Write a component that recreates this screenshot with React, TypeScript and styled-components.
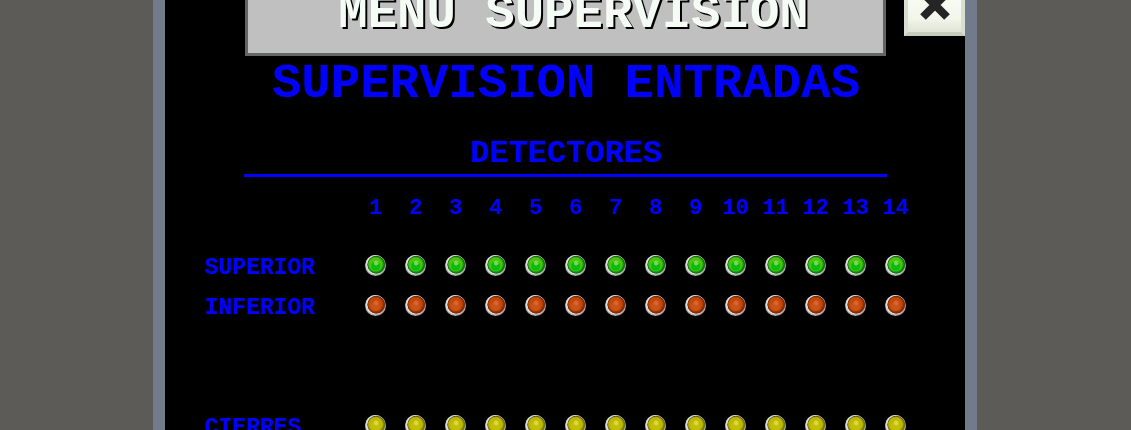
import React from "react";
import styled, { createGlobalStyle } from "styled-components";

const GlobalStyle = createGlobalStyle`
  * { box-sizing: border-box; }
  html, body { margin: 0; background: #5d5b58; }
  body { font-family: "Courier New", "Liberation Mono", monospace; font-weight: 700; }
`;

const Page = styled.div`
  height: 100vh;
  overflow: hidden;
  padding-right: 1px;
  background: #5d5b58;
`;

const Panel = styled.main`
  max-width: 824px;
  min-height: 100%;
  margin: 0 auto;
  border: solid #727b8c;
  border-width: 0 12px;
  background: #000;
  color: #00f;
`;

const Header = styled.header`
  display: flex;
  justify-content: space-between;
  align-items: flex-start;
  height: 56px;
  padding-left: 80px;
`;

const TitleBox = styled.div`
  flex: 1;
  display: flex;
  flex-direction: column;
  justify-content: flex-end;
  align-items: center;
  height: 56px;
  margin-right: 18px;
  padding: 0 0 11px 16px;
  overflow: hidden;
  border: solid #636665;
  border-width: 0 3px 3px;
  background: #c0c0c0;
`;

const Title = styled.h1`
  flex: none;
  margin: 0;
  font-size: 49px;
  line-height: 56px;
  white-space: nowrap;
  color: #f5fbf5;
  text-shadow: 2px 2px 0 #000;
`;

const CloseButton = styled.button`
  display: flex;
  align-items: flex-end;
  justify-content: center;
  width: 61px;
  height: 36px;
  padding: 0;
  border: solid #d9dfd0;
  border-width: 0 4px 4px;
  border-bottom-color: #c6cdbb;
  background: linear-gradient(#f8fbf2, #f1f5ea 60%, #dfe4d6);
  overflow: hidden;
`;

const PageTitle = styled.h2`
  margin: 0;
  padding-left: 2px;
  font-size: 49px;
  line-height: 56px;
  text-align: center;
  white-space: nowrap;
`;

const SectionTitle = styled.h3`
  margin: 24px 78px 12px 79px;
  padding: 0 0 2px 2px;
  border-bottom: 3px solid #00f;
  font-size: 32px;
  line-height: 36px;
  text-align: center;
`;

const Grid = styled.table`
  margin-left: 40px;
  border-collapse: collapse;
  table-layout: fixed;
  width: 711px;
  font-size: 23px;
  line-height: 24px;

  th, td { padding: 0; }
`;

const LabelCol = styled.col`
  width: 151px;
`;

const NumberCell = styled.th`
  && {
    height: 56px;
    padding-bottom: 16px;
    font-size: 22px;
    text-align: center;
  }
`;

const LabelCell = styled.th`
  && {
    height: 40px;
    padding-top: 5px;
    text-align: left;
  }
`;

const LampCell = styled.td`
  && {
    height: 40px;
    padding-top: 2px;
    text-align: center;
  }

  svg { display: block; margin: 0 auto; }
`;

const Spacer = styled.tbody`
  height: 80px;
`;

type Tone = { dark: string; mid: string; light: string; core: string; glow: string };

const tones: Record<string, Tone> = {
  green: { dark: "#087d08", mid: "#18a510", light: "#4cc408", core: "#08bd10", glow: "#7ad35a" },
  red: { dark: "#8c2400", mid: "#a93000", light: "#c44800", core: "#c6551a", glow: "#dc6236" },
  yellow: { dark: "#7c7900", mid: "#a09c00", light: "#bdb800", core: "#c4bf08", glow: "#dcd83a" },
};

const Lamp = ({ tone, label }: { tone: Tone; label: string }) => (
  <svg width="22" height="22" viewBox="0 0 22 22" role="img" aria-label={label}>
    <circle cx="10.5" cy="10.5" r="10.5" fill="#a5a5a5" />
    <circle cx="10.3" cy="9.8" r="9.7" fill="#e0e0e0" />
    <circle cx="11.2" cy="9.6" r="8.8" fill="#333" />
    <circle cx="11.3" cy="9.9" r="8.6" fill={tone.dark} />
    <circle cx="10.8" cy="9.6" r="7.8" fill={tone.mid} />
    <circle cx="10.6" cy="9.2" r="7" fill={tone.light} />
    <circle cx="10.6" cy="11" r="4.6" fill={tone.core} />
    <circle cx="11.2" cy="8" r="2.4" fill={tone.glow} />
  </svg>
);

const numbers = Array.from({ length: 14 }, (_, i) => i + 1);

const LampRow = ({ label, tone }: { label: string; tone: string }) => (
  <tr>
    <LabelCell scope="row">{label}</LabelCell>
    {numbers.map((n) => (
      <LampCell key={n}>
        <Lamp tone={tones[tone]} label={`${label} ${n}`} />
      </LampCell>
    ))}
  </tr>
);

export default function App() {
  return (
    <Page>
      <GlobalStyle />
      <Panel>
        <Header>
          <TitleBox>
            <Title>MENU SUPERVISION</Title>
          </TitleBox>
          <CloseButton type="button" aria-label="Cerrar">
            <svg width="32" height="32" viewBox="0 0 32 32">
              <path d="M4 -7L28 17M28 -7L4 17" stroke="#252525" strokeWidth="8" />
            </svg>
          </CloseButton>
        </Header>
        <PageTitle>SUPERVISION ENTRADAS</PageTitle>
        <SectionTitle>DETECTORES</SectionTitle>
        <Grid>
          <colgroup>
            <LabelCol />
            <col span={14} />
          </colgroup>
          <thead>
            <tr>
              <td />
              {numbers.map((n) => (
                <NumberCell key={n} scope="col">{n}</NumberCell>
              ))}
            </tr>
          </thead>
          <tbody>
            <LampRow label="SUPERIOR" tone="green" />
            <LampRow label="INFERIOR" tone="red" />
          </tbody>
          <Spacer>
            <tr>
              <td colSpan={15} />
            </tr>
          </Spacer>
          <tbody>
            <LampRow label="CIERRES" tone="yellow" />
          </tbody>
        </Grid>
      </Panel>
    </Page>
  );
}
